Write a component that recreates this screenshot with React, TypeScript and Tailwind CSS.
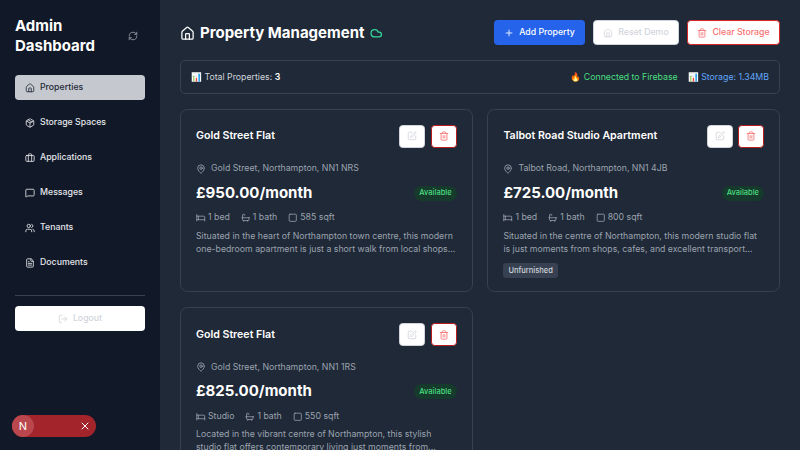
import { Home, Package, Briefcase, MessageSquare, Users, FileText, LogOut, RefreshCw, Cloud, Plus, Trash2, SquarePen, MapPin, Bed, Bath, Square, X } from "lucide-react";
import type { ComponentType } from "react";

const nav: [string, ComponentType<any>][] = [
  ["Properties", Home],
  ["Storage Spaces", Package],
  ["Applications", Briefcase],
  ["Messages", MessageSquare],
  ["Tenants", Users],
  ["Documents", FileText],
];

function Card(p: { title: string; addr: string; price: string; bed: string; sqft: string; desc: string[]; tag?: string }) {
  return (
    <div className="h-[183.25px] rounded-[7.5px] border border-[#374151] px-[15px] pt-[15px]">
      <div className="flex h-[22.5px] items-center justify-between">
        <h3 className="text-[10.625px] font-semibold text-white">{p.title}</h3>
        <div className="flex gap-[5.5px]">
          <button className="flex h-[22.5px] w-[26px] items-center justify-center rounded-[3.75px] border border-[#d1d5db] bg-white text-[#d1d5db]"><SquarePen size={10} /></button>
          <button className="flex h-[22.5px] w-[26px] items-center justify-center rounded-[3.75px] border border-[#b91c1c] bg-white text-[#f87171]"><Trash2 size={10} /></button>
        </div>
      </div>
      <div className="mt-[14.5px] flex h-[14px] items-center gap-[5px] text-[8.75px] text-[#9ca3af]"><MapPin size={10} />{p.addr}</div>
      <div className="mt-[5px] flex h-[24px] items-center justify-between">
        <span className="text-[15px] font-bold text-white">{p.price}</span>
        <span className="flex h-[15px] items-center rounded-full bg-[#163a2c] px-[5px] text-[7.5px] font-medium text-[#4ade80]">Available</span>
      </div>
      <div className="mt-[6px] flex h-[14px] items-center gap-[11px] text-[8.75px] text-[#9ca3af]">
        <span className="flex items-center gap-[2.5px]"><Bed size={9.5} />{p.bed}</span>
        <span className="flex items-center gap-[2.5px]"><Bath size={9.5} />1 bath</span>
        <span className="flex items-center gap-[2.5px]"><Square size={9.5} />{p.sqft}</span>
      </div>
      <p className="mt-[5px] text-[8.75px] leading-[12.5px] text-[#9ca3af]">{p.desc[0]}<br />{p.desc[1]}</p>
      {p.tag && <span className="mt-[4px] inline-flex h-[15px] items-center rounded-[3px] bg-[#374151] px-[5px] text-[7.5px] font-medium text-[#d1d5db]">{p.tag}</span>}
    </div>
  );
}

export default function App() {
  return (
    <div className="flex h-[450px] w-[800px] overflow-hidden bg-[#1f2937] font-['Inter',sans-serif]">
      <aside className="relative flex w-[160px] shrink-0 flex-col bg-[#111827] p-[15px]">
        <div className="flex items-center justify-between pt-[1px]">
          <h1 className="text-[15px] font-bold leading-[19.5px] text-white">Admin<br />Dashboard</h1>
          <RefreshCw size={10} className="mr-[7px] text-[#9ca3af]" />
        </div>
        <nav className="mt-[20px] flex flex-col gap-[10px]">
          {nav.map(([label, Icon], i) => (
            <div key={label} className={`flex h-[25px] items-center gap-[5px] rounded-[3.75px] px-[10px] pt-[1px] text-[8.75px] font-medium ${i === 0 ? "bg-[#c5c8cf] text-[#1f2937]" : "text-[#e5e7eb]"}`}>
              <Icon size={10} />{label}
            </div>
          ))}
        </nav>
        <div className="mt-[20px] border-t border-[#374151] pt-[10px]">
          <button className="flex h-[25px] w-full items-center justify-center gap-[5px] rounded-[3.75px] bg-white text-[8.75px] font-medium text-[#d1d5db]"><LogOut size={10} />Logout</button>
        </div>
        <div className="absolute left-[12px] top-[415px] flex h-[22px] w-[84px] items-center justify-between rounded-full bg-[#a3242b] pr-[5px]">
          <span className="flex size-[22px] items-center justify-center rounded-full bg-[#b9474d] text-[11px] font-normal text-white">N</span>
          <X size={12} className="text-white" />
        </div>
      </aside>
      <main className="flex-1 overflow-hidden px-[20px] pt-[20px]">
        <header className="flex h-[25px] items-center justify-between">
          <div className="flex items-center gap-[5px] pt-[1px]">
            <Home size={15} className="text-white" />
            <h2 className="text-[15px] font-bold text-white">Property Management</h2>
            <Cloud size={12.5} strokeWidth={2.5} className="ml-[1px] text-[#34d399]" />
          </div>
          <div className="flex gap-[8px] text-[8.75px] font-medium">
            <button className="flex h-[25px] w-[91px] items-center justify-center gap-[5px] rounded-[3.75px] bg-[#2563eb] pt-[1px] text-white"><Plus size={10} />Add Property</button>
            <button className="flex h-[25px] w-[86px] items-center justify-center gap-[5px] rounded-[3.75px] border border-[#d1d5db] bg-white pt-[1px] text-[#d1d5db]"><Home size={10} />Reset Demo</button>
            <button className="flex h-[25px] w-[93px] items-center justify-center gap-[5px] rounded-[3.75px] border border-[#dc2626] bg-white pt-[1px] text-[#f87171]"><Trash2 size={10} />Clear Storage</button>
          </div>
        </header>
        <div className="mt-[15px] flex h-[34px] items-center justify-between rounded-[5px] border border-[#374151] px-[10px] pt-[2px] text-[8.75px]">
          <span className="text-[#d1d5db]">📊 Total Properties: <b className="font-semibold text-white">3</b></span>
          <div className="flex gap-[10px]">
            <span className="text-[#4ade80]">🔥 Connected to Firebase</span>
            <span className="text-[#60a5fa]">📊 Storage: 1.34MB</span>
          </div>
        </div>
        <div className="mt-[15px] grid grid-cols-2 gap-x-[14.8px] gap-y-[15px]">
          <Card title="Gold Street Flat" addr="Gold Street, Northampton, NN1 NRS" price="£950.00/month" bed="1 bed" sqft="585 sqft" desc={["Situated in the heart of Northampton town centre, this modern", "one-bedroom apartment is just a short walk from local shops..."]} />
          <Card title="Talbot Road Studio Apartment" addr="Talbot Road, Northampton, NN1 4JB" price="£725.00/month" bed="1 bed" sqft="800 sqft" desc={["Situated in the centre of Northampton, this modern studio flat", "is just moments from shops, cafes, and excellent transport..."]} tag="Unfurnished" />
          <Card title="Gold Street Flat" addr="Gold Street, Northampton, NN1 1RS" price="£825.00/month" bed="Studio" sqft="550 sqft" desc={["Located in the vibrant centre of Northampton, this stylish", "studio flat offers contemporary living just moments from..."]} />
        </div>
      </main>
    </div>
  );
}
